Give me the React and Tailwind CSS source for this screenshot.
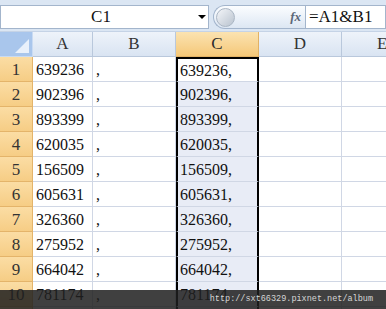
import React from 'react'

const rows = [
  ['639236', '639236,'],
  ['902396', '902396,'],
  ['893399', '893399,'],
  ['620035', '620035,'],
  ['156509', '156509,'],
  ['605631', '605631,'],
  ['326360', '326360,'],
  ['275952', '275952,'],
  ['664042', '664042,'],
  ['781174', '781174,'],
  ['', ''],
]

const serif = { fontFamily: '"Liberation Serif", "Times New Roman", serif' }

const ColHeader = ({ label, width, active }) => (
  <div
    className={`h-full shrink-0 flex items-center justify-center border-r border-b text-[17px] ${
      active
        ? 'bg-gradient-to-b from-[#fbe3b1] to-[#f5c878] border-[#e2b265] text-[#2d2d2d]'
        : 'bg-gradient-to-b from-[#eef3fa] to-[#d9e4f2] border-[#b9c8dc] text-[#333]'
    }`}
    style={{ width }}
  >
    {label}
  </div>
)

const Row = ({ n, a, c, first }) => (
  <div className="flex h-[25px] shrink-0">
    <div className="w-[33px] shrink-0 flex items-center justify-center bg-gradient-to-b from-[#fbdda4] to-[#f6cd85] border-b border-r border-[#e4b46a] text-[17px] text-[#333] pt-[2px]">
      {n}
    </div>
    <div className="w-[60px] shrink-0 flex items-center pl-[3px] pt-[2px] border-b border-r border-[#d0d7e5] text-[16px] text-[#111] bg-white">
      {a}
    </div>
    <div className="w-[83px] shrink-0 flex items-center pl-[3px] pt-[2px] border-b border-r border-[#d0d7e5] text-[16px] text-[#111] bg-white">
      {a ? ',' : ''}
    </div>
    <div
      className={`w-[83px] shrink-0 flex items-center pl-[2px] pt-[2px] border-x-2 border-x-black border-b border-b-[#d0d7e5] text-[16px] text-[#111] ${
        first ? 'bg-white border-t-2 border-t-black' : 'bg-[#e8ecf6]'
      }`}
    >
      {c}
    </div>
    <div className="w-[83px] shrink-0 border-b border-r border-[#d0d7e5] bg-white" />
    <div className="flex-1 border-b border-[#d0d7e5] bg-white" />
  </div>
)

export default function App() {
  return (
    <div className="relative w-[386px] h-[309px] overflow-hidden bg-white" style={serif}>
      <div className="flex h-[32px] items-start pt-[5px] bg-[#dbe6f3] border-b border-[#c5d3e6]">
        <div className="w-[209px] h-[24px] shrink-0 flex items-center bg-white border border-[#a3b5cc]">
          <div className="flex-1 text-center text-[17px] text-[#111] pl-[5px]">C1</div>
          <div className="w-[12px] flex justify-center">
            <div className="w-0 h-0 border-l-[4px] border-r-[4px] border-t-[4px] border-l-transparent border-r-transparent border-t-black" />
          </div>
        </div>
        <div className="w-[4px] shrink-0" />
        <div className="w-[92px] h-[24px] shrink-0 flex items-center rounded-l-full bg-gradient-to-b from-[#fbfdff] to-[#dde7f3] border border-[#a3b5cc] border-r-0">
          <div className="w-[19px] h-[19px] ml-[2px] rounded-full bg-gradient-to-br from-[#f4f6f9] to-[#b9c3cf] border border-[#aab6c4]" />
          <div className="flex-1" />
          <div className="italic font-bold text-[13px] text-[#5b6778] pr-[4px]">fx</div>
        </div>
        <div className="flex-1 h-[24px] flex items-center bg-white border border-[#a3b5cc] pl-[3px] text-[17px] text-[#111]">
          =A1&amp;B1
        </div>
      </div>
      <div className="flex flex-col">
        <div className="flex h-[25px] shrink-0">
          <div className="w-[33px] h-full shrink-0 relative bg-[#a9c6ec] border-r border-b border-[#c9dbf3]">
            <div className="absolute right-[3px] bottom-[3px] w-0 h-0 border-l-[14px] border-t-[14px] border-l-transparent border-t-transparent border-b-[14px] border-b-[#eaf1fb] border-r-0" />
          </div>
          <ColHeader label="A" width={60} />
          <ColHeader label="B" width={83} />
          <ColHeader label="C" width={83} active />
          <ColHeader label="D" width={83} />
          <div className="flex-1 h-full flex items-center pl-[35px] border-b border-[#b9c8dc] bg-gradient-to-b from-[#eef3fa] to-[#d9e4f2] text-[17px] text-[#333]">
            E
          </div>
        </div>
        {rows.map((r, i) => (
          <Row key={i} n={i < 10 ? i + 1 : ''} a={r[0]} c={r[1]} first={i === 0} />
        ))}
      </div>
      <div className="absolute left-0 right-0 bottom-0 h-[19px] bg-[#1e1e1e]/85 flex items-center justify-end pr-[13px]">
        <span className="text-[8.5px] text-[#d6d6d6]" style={{ fontFamily: '"Liberation Mono", "Courier New", monospace' }}>
          http://sxt66329.pixnet.net/album
        </span>
      </div>
    </div>
  )
}
